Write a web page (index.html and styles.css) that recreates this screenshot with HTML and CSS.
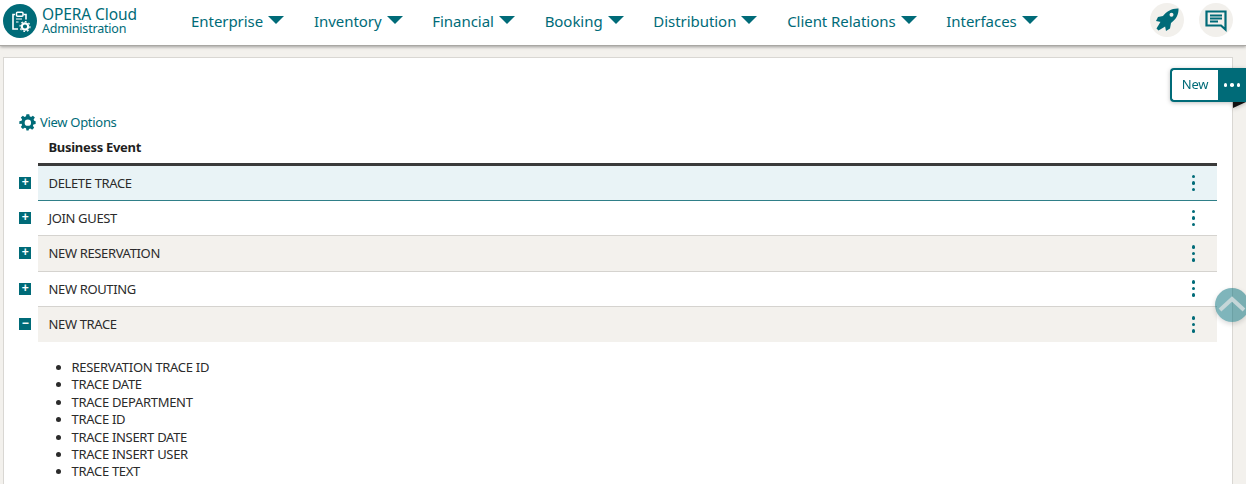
FILE: index.html
```html
<!DOCTYPE html>
<html lang="en">
<head>
<meta charset="utf-8">
<title>OPERA Cloud Administration</title>
<link rel="stylesheet" href="styles.css">
</head>
<body>
<header class="topbar">
  <div class="brand">
    <span class="brand-logo">
      <svg viewBox="0 0 34 34" width="34" height="34"><circle cx="17" cy="17" r="17" fill="#006b78"/><path d="M12 10.500H10V25h5M20.500 10.500H23v5" fill="none" stroke="#fff" stroke-width="1.600"/><rect x="13.500" y="8.300" width="6.500" height="4" rx="1" fill="none" stroke="#fff" stroke-width="1.500"/><path d="M13 15h6M13 18h2.500" stroke="#fff" stroke-width="1.200"/><circle cx="22" cy="22.500" r="3.200" fill="none" stroke="#fff" stroke-width="2.200"/><circle cx="22" cy="22.500" r="5" fill="none" stroke="#fff" stroke-width="1.200" stroke-dasharray="1.800 2"/></svg>
    </span>
    <span class="brand-text"><span class="brand-name">OPERA Cloud</span><span class="brand-sub">Administration</span></span>
  </div>
  <nav class="nav">
    <a class="nav-item">Enterprise<i class="caret"></i></a>
    <a class="nav-item">Inventory<i class="caret"></i></a>
    <a class="nav-item">Financial<i class="caret"></i></a>
    <a class="nav-item">Booking<i class="caret"></i></a>
    <a class="nav-item">Distribution<i class="caret"></i></a>
    <a class="nav-item">Client Relations<i class="caret"></i></a>
    <a class="nav-item">Interfaces<i class="caret"></i></a>
  </nav>
  <div class="top-actions">
    <span class="round-btn"><svg viewBox="0 0 23 23" width="23" height="23"><path fill="#006b78" d="M5 13l5 5-7.500 4.500L.5 20.500z"/><path fill="#006b78" fill-rule="evenodd" d="M22.500 .5C15.500 .2 10.500 3.500 7 8L2 9 0 13l5 1 4 4 1 5 4-2.500 1-5.500c5-3.500 7.800-8.500 7.500-14.500zM15.500 4.700a2 2 0 1 1 0 4 2 2 0 0 1 0-4z"/></svg></span>
    <span class="round-btn"><svg viewBox="0 0 24 24" width="24" height="24"><path d="M2.500 3.500h19v18l-4.500-4H2.500z" fill="none" stroke="#006b78" stroke-width="2.200"/><path d="M6 7.500h12M6 10.500h12M6 13.500h8" stroke="#006b78" stroke-width="1.800"/></svg></span>
  </div>
</header>
<main class="panel">
  <div class="toolbar">
    <button class="new-btn">New</button><button class="more-btn"><i></i><i></i><i></i></button>
    <span class="fold"></span>
  </div>
  <a class="view-options">
    <svg viewBox="0 0 24 24" width="17" height="17"><path fill="#006b78" fill-rule="evenodd" d="M10 1h4l.6 3.100 1.900.8 2.600-1.800 2.800 2.800-1.800 2.600.8 1.900L23 11v4l-3.100.6-.8 1.900 1.800 2.600-2.800 2.800-2.600-1.800-1.900.8L13 24h-3l-.6-3.100-1.900-.8-2.600 1.800-2.800-2.800 1.800-2.600-.8-1.900L0 15v-4l3.100-.6.800-1.900L2.100 5.900l2.800-2.800 2.600 1.800 1.900-.8zM12 8.500a4.500 4.500 0 1 0 0 9 4.500 4.500 0 0 0 0-9z" transform="translate(.5 -.8)"/></svg>
    <span>View Options</span>
  </a>
  <div class="table">
    <div class="col-head">Business Event</div>
    <div class="row row-active"><span class="tog">+</span><span class="cell">DELETE TRACE</span><span class="dots"><i></i><i></i><i></i></span></div>
    <div class="row"><span class="tog">+</span><span class="cell">JOIN GUEST</span><span class="dots"><i></i><i></i><i></i></span></div>
    <div class="row row-alt"><span class="tog">+</span><span class="cell">NEW RESERVATION</span><span class="dots"><i></i><i></i><i></i></span></div>
    <div class="row"><span class="tog">+</span><span class="cell">NEW ROUTING</span><span class="dots"><i></i><i></i><i></i></span></div>
    <div class="row row-alt row-open"><span class="tog tog-minus">−</span><span class="cell">NEW TRACE</span><span class="dots"><i></i><i></i><i></i></span></div>
    <ul class="details">
      <li>RESERVATION TRACE ID</li>
      <li>TRACE DATE</li>
      <li>TRACE DEPARTMENT</li>
      <li>TRACE ID</li>
      <li>TRACE INSERT DATE</li>
      <li>TRACE INSERT USER</li>
      <li>TRACE TEXT</li>
    </ul>
  </div>
</main>
<span class="to-top"><svg viewBox="0 0 32 32" width="32" height="32"><path d="M4 21L16 10l12 11" fill="none" stroke="#c5d6d8" stroke-width="4"/></svg></span>
</body>
</html>
```
FILE: styles.css
```css
* { box-sizing: border-box; }
html, body { margin: 0; height: 484px; overflow: hidden; }
body {
  background: #f3f1ed;
  font-family: "Noto Sans", "Open Sans", sans-serif;
  color: #2b2b2b;
  position: relative;
}
.topbar {
  height: 46px;
  background: #fff;
  border-bottom: 1px solid #a9a7a3;
  box-shadow: 0 1px 3px rgba(0,0,0,.35);
  display: flex;
  align-items: center;
  padding: 0 0 0 3px;
}
.brand { display: flex; align-items: center; gap: 5px; width: 188px; flex: none; margin-top: -3px; }
.brand-logo { display: flex; }
.brand-text { display: flex; flex-direction: column; color: #006b78; letter-spacing: -.1px; }
.brand-name { font-size: 15.500px; line-height: 15px; }
.brand-sub { font-size: 12.500px; line-height: 13px; letter-spacing: -.2px; }
.nav { display: flex; flex: 1; gap: 29.800px; margin-top: -4px; }
.nav-item { font-size: 15px; color: #006b78; display: flex; align-items: center; letter-spacing: -.05px; }
.caret {
  width: 0; height: 0; margin-left: 5px; margin-top: -1px;
  border-left: 8.500px solid transparent;
  border-right: 8.500px solid transparent;
  border-top: 8.500px solid #006b78;
}
.top-actions { display: flex; gap: 15px; padding-right: 13px; margin-top: -6px; }
.round-btn {
  width: 34px; height: 34px; border-radius: 50%;
  background: #f2f0ec;
  display: flex; align-items: center; justify-content: center;
}
.panel {
  margin: 11px 13px 0 3px;
  background: #fff;
  border: 1px solid #d9d7d3;
  height: 440px;
  position: relative;
  padding: 0 15px 0 15px;
}
.toolbar {
  position: absolute; top: 10px; right: -14px;
  display: flex; height: 34px;
  filter: drop-shadow(0 1px 2px rgba(0,0,0,.25));
}
.new-btn {
  width: 48px; border: 2px solid #006b78; border-right: 0;
  border-radius: 4px 0 0 4px; background: #fff; color: #006b78;
  font: 13px "Noto Sans", sans-serif; letter-spacing: -.2px; padding: 0 0 2px;
}
.more-btn {
  width: 28px; border: 0; background: #006b78; padding: 0;
  display: flex; align-items: center; justify-content: center; gap: 3px;
}
.more-btn i { width: 3.500px; height: 3.500px; border-radius: 50%; background: #fff; }
.fold {
  position: absolute; right: 0; top: 34px; width: 0; height: 0;
  border-top: 6px solid #111; border-right: 13px solid transparent;
}
.view-options {
  display: flex; align-items: center; gap: 4px;
  padding-top: 56px; height: 72px;
  font-size: 13px; color: #006b78; letter-spacing: -.3px;
}
.table { display: flex; flex-direction: column; }
.col-head {
  margin-left: 19px; padding: 8px 0 0 10.500px; height: 36px;
  font-size: 13px; font-weight: 700; color: #1f1f1f; letter-spacing: -.3px;
  border-bottom: 3px solid #3a3a3a;
}
.row {
  display: flex; align-items: center; position: relative;
  height: 35.300px; margin-left: 19px; padding-left: 10.500px;
  font-size: 13px; letter-spacing: -.35px; border-bottom: 1px solid #d5d3cf;
}
.row-active { background: #e9f3f6; border-bottom-color: #2f7f88; height: 35px; }
.row-alt { background: #f3f1ed; }
.row-open { border-bottom: 0; height: 35px; }
.tog {
  position: absolute; left: -19px; top: 11px;
  width: 12px; height: 12px; background: #006b78; color: #fff;
  font: 700 12px/11px "Liberation Sans", sans-serif; text-align: center;
}
.cell { flex: 1; }
.dots {
  display: flex; flex-direction: column; gap: 3px; align-items: center;
  margin-right: 22px;
}
.dots i { width: 3.500px; height: 3.500px; border-radius: 50%; background: #006b78; }
.details {
  margin: 17px 0 0; padding: 0 0 0 52.500px;
  font-size: 13px; line-height: 17.400px; letter-spacing: -.3px;
  list-style: disc;
}
.to-top {
  position: absolute; left: 1215px; top: 288px;
  width: 34px; height: 34px; border-radius: 50%;
  background: rgba(0,107,120,.5);
  display: flex; align-items: center; justify-content: center;
  box-shadow: 0 2px 5px rgba(0,0,0,.15);
}
```
